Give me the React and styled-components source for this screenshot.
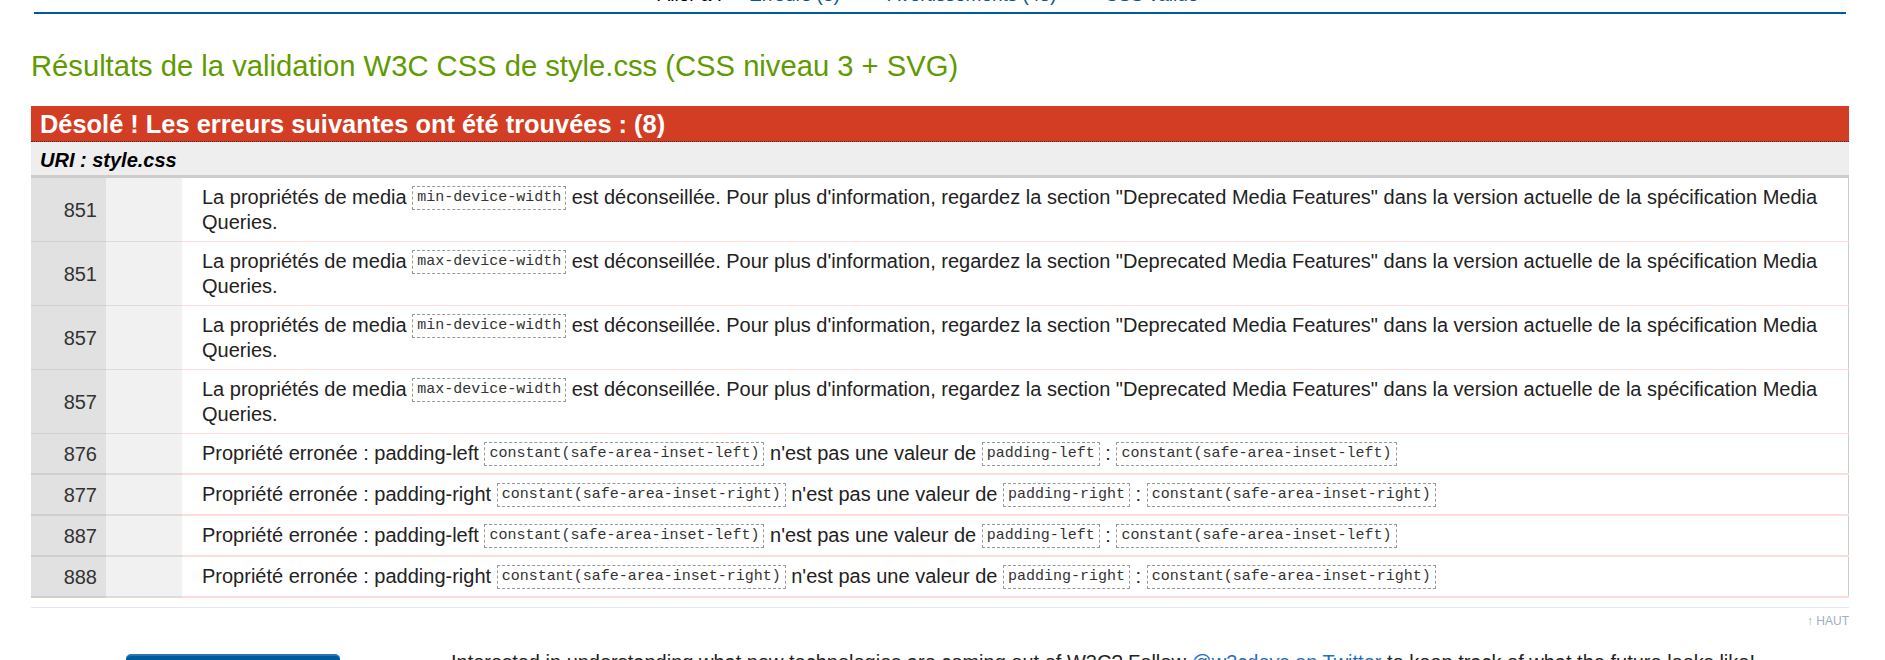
import React from 'react'
import styled, { createGlobalStyle } from 'styled-components'

const GlobalStyle = createGlobalStyle`
  html, body {
    margin: 0;
    padding: 0;
    overflow: hidden;
    background: #fff;
  }
  body {
    font-family: "Liberation Sans", Arial, sans-serif;
    color: #222;
  }
`

const Page = styled.div`
  padding: 0 36px 0 31px;
`

const Nav = styled.nav`
  margin: -17px 3px 0;
  padding: 0 24px 5px 0;
  border-bottom: 2px solid #005a9c;
  display: flex;
  justify-content: center;
  align-items: baseline;
  gap: 48px;
  font-size: 19px;
  line-height: 24px;
`

const NavLabel = styled.span`
  color: #000;
  margin-right: -21px;
`

const NavLink = styled.a`
  color: #005a9c;
  text-decoration: none;
`

const Title = styled.h2`
  margin: 35px 0 23px;
  font-size: 29.2px;
  line-height: 34px;
  font-weight: normal;
  color: #5f9a00;
`

const ErrorBar = styled.h3`
  margin: 0;
  padding: 3px 9px 2px;
  background: #d33d23;
  color: #fff;
  font-size: 25.4px;
  line-height: 30px;
  font-weight: bold;
  border-bottom: 1px dotted #333;
`

const UriRow = styled.h4`
  margin: 0;
  padding: 7px 9px 3px;
  background: #eee;
  border-bottom: 3px solid #ccc;
  font-size: 20px;
  line-height: 23px;
  font-weight: bold;
  font-style: italic;
  color: #000;
`

const Table = styled.table`
  width: 100%;
  border-collapse: collapse;
  font-size: 20px;
  line-height: 24px;
`

const LineCell = styled.td`
  width: 66px;
  padding: 0 9px 0 0;
  background: #e1e1e1;
  color: #333;
  text-align: right;
  vertical-align: middle;
  border-bottom: ${p => (p.$thick ? 2 : 1)}px solid #cfcfcf;
`

const ContextCell = styled.td`
  width: 76px;
  padding: 0;
  background: #f1f1f1;
  border-bottom: ${p => (p.$thick ? 2 : 1)}px solid #dcdcdc;
`

const MessageCell = styled.td`
  padding: 7px 20px;
  color: #222;
  vertical-align: middle;
  border-right: 1px solid #ccc;
  border-bottom: ${p => (p.$thick ? 2 : 1)}px solid #ffdcdc;
`

const Code = styled.code`
  display: inline-block;
  vertical-align: 3px;
  padding: 0 4px;
  border: 1px dashed #999;
  font-family: "Liberation Mono", "DejaVu Sans Mono", monospace;
  font-size: 15px;
  line-height: 22px;
  color: #333;
`

const Divider = styled.div`
  margin-top: 9px;
  border-top: 1px solid #e6e6fa;
`

const TopRow = styled.div`
  margin-top: 5px;
  text-align: right;
  font-size: 12px;
  line-height: 16px;
`

const TopLink = styled.a`
  color: #a3aec4;
  text-decoration: none;
`

const Footer = styled.footer`
  margin-top: 21px;
  padding-left: 95px;
  display: flex;
  align-items: flex-start;
  gap: 111px;
`

const Logo = styled.div`
  flex: none;
  width: 214px;
  height: 60px;
  margin-top: 4px;
  background: #005a9c;
  border-top: 2px solid #2a74b4;
  border-radius: 5px 5px 0 0;
`

const FooterText = styled.p`
  margin: 0;
  font-size: 20px;
  line-height: 24px;
  color: #222;
`

const FooterLink = styled.a`
  color: #2a6ebb;
  text-decoration: none;
`

const deprecated = [
  ['851', 'min-device-width'],
  ['851', 'max-device-width'],
  ['857', 'min-device-width'],
  ['857', 'max-device-width'],
]

const invalid = [
  ['876', 'padding-left', 'constant(safe-area-inset-left)'],
  ['877', 'padding-right', 'constant(safe-area-inset-right)'],
  ['887', 'padding-left', 'constant(safe-area-inset-left)'],
  ['888', 'padding-right', 'constant(safe-area-inset-right)'],
]

export default function App() {
  return (
    <Page>
      <GlobalStyle />
      <Nav>
        <NavLabel>Aller à :</NavLabel>
        <NavLink href="#errors">Erreurs (8)</NavLink>
        <NavLink href="#warnings">Avertissements (43)</NavLink>
        <NavLink href="#css">CSS valide</NavLink>
      </Nav>

      <Title>Résultats de la validation W3C CSS de style.css (CSS niveau 3 + SVG)</Title>

      <ErrorBar>Désolé ! Les erreurs suivantes ont été trouvées : (8)</ErrorBar>
      <UriRow>URI : style.css</UriRow>

      <Table>
        <tbody>
          {deprecated.map(([line, feature], i) => (
            <tr key={'d' + i}>
              <LineCell>{line}</LineCell>
              <ContextCell />
              <MessageCell>
                La propriétés de media <Code>{feature}</Code> est déconseillée. Pour plus d'information, regardez la section "Deprecated Media Features" dans la version actuelle de la spécification Media Queries.
              </MessageCell>
            </tr>
          ))}
          {invalid.map(([line, prop, value], i) => (
            <tr key={'p' + i}>
              <LineCell $thick>{line}</LineCell>
              <ContextCell $thick />
              <MessageCell $thick>
                Propriété erronée : {prop} <Code>{value}</Code> n'est pas une valeur de <Code>{prop}</Code> : <Code>{value}</Code>
              </MessageCell>
            </tr>
          ))}
        </tbody>
      </Table>

      <Divider />
      <TopRow>
        <TopLink href="#top">↑ HAUT</TopLink>
      </TopRow>

      <Footer>
        <Logo />
        <FooterText>
          Interested in understanding what new technologies are coming out of W3C? Follow <FooterLink href="#tw">@w3cdevs on Twitter</FooterLink> to keep track of what the future looks like!
        </FooterText>
      </Footer>
    </Page>
  )
}
